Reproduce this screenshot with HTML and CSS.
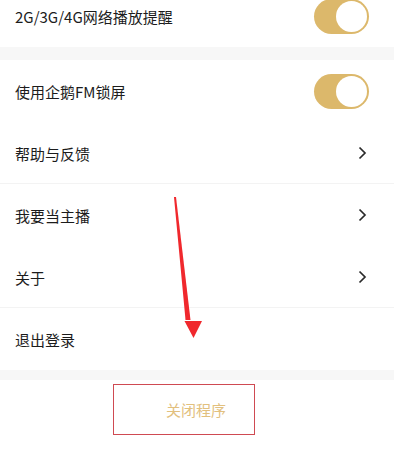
FILE: index.html
```html
<!DOCTYPE html>
<html lang="zh-CN">
<head>
  <meta charset="UTF-8" />
  <meta name="viewport" content="width=device-width, initial-scale=1.0" />
  <title>设置</title>
  <link rel="stylesheet" href="styles.css">
</head>
<body>
<div class="page">
  <div class="group group-top">
    <div class="row">
      <span class="label">2G/3G/4G网络播放提醒</span>
      <span class="switch on"><span class="knob"></span></span>
    </div>
  </div>
  <div class="gap"></div>
  <div class="group">
    <div class="row">
      <span class="label">使用企鹅FM锁屏</span>
      <span class="switch on"><span class="knob"></span></span>
    </div>
    <div class="row line">
      <span class="label">帮助与反馈</span>
      <svg class="chevron" width="9" height="14" viewBox="0 0 9 14"><path d="M1.5 1.5 L7 7 L1.5 12.5" fill="none" stroke="#2a2a2a" stroke-width="1.7"/></svg>
    </div>
    <div class="row">
      <span class="label">我要当主播</span>
      <svg class="chevron" width="9" height="14" viewBox="0 0 9 14"><path d="M1.5 1.5 L7 7 L1.5 12.5" fill="none" stroke="#2a2a2a" stroke-width="1.7"/></svg>
    </div>
    <div class="row line">
      <span class="label">关于</span>
      <svg class="chevron" width="9" height="14" viewBox="0 0 9 14"><path d="M1.5 1.5 L7 7 L1.5 12.5" fill="none" stroke="#2a2a2a" stroke-width="1.7"/></svg>
    </div>
    <div class="row">
      <span class="label">退出登录</span>
    </div>
  </div>
  <div class="gap small"></div>
  <div class="footer">
    <div class="close-btn">关闭程序</div>
  </div>

  <!-- annotation arrow drawn over the screenshot -->
  <svg class="arrow" width="394" height="455" viewBox="0 0 394 455">
    <path d="M174 197 L176 197 L190.5 320 L185.5 320 Z" fill="#f0282d"/>
    <path d="M184.5 321 L202 321 L193.5 338 Z" fill="#f0282d"/>
  </svg>
</div>
</body>
</html>
```

FILE: styles.css
```css
body {
  margin: 0;
  background-color: #fff;
  font-family: "Noto Sans CJK SC", "Noto Sans", sans-serif;
  color: #1c1c1c;
}
.page {
  position: relative;
  width: 394px;
  height: 455px;
  overflow: hidden;
}
.group {
  background-color: #fff;
}
.group-top {
  margin-top: -15px;
}
.row {
  height: 62px;
  display: flex;
  align-items: center;
  justify-content: space-between;
  padding: 0 25px 0 15px;
  box-sizing: border-box;
}
.row.line {
  border-bottom: 1px solid #f3f3f3;
}
.label {
  font-size: 15px;
  line-height: 20px;
  padding-top: 2px;
}
.gap {
  height: 13px;
  background-color: #f7f7f7;
}
.gap.small {
  height: 10px;
}
.switch {
  width: 55px;
  height: 35px;
  border-radius: 18px;
  background-color: #dcb86b;
  display: flex;
  align-items: center;
  justify-content: flex-end;
  padding: 2px;
  box-sizing: border-box;
}
.knob {
  width: 31px;
  height: 31px;
  border-radius: 50%;
  background-color: #fff;
}
.chevron {
  margin-right: 2px;
}
.footer {
  padding-top: 4px;
  padding-left: 113px;
}
.close-btn {
  width: 142px;
  height: 51px;
  box-sizing: border-box;
  border: 1px solid #cf4a52;
  display: flex;
  align-items: center;
  padding-left: 52px;
  font-size: 15px;
  color: #e2c07e;
}
.arrow {
  position: absolute;
  left: 0;
  top: 0;
}
```
